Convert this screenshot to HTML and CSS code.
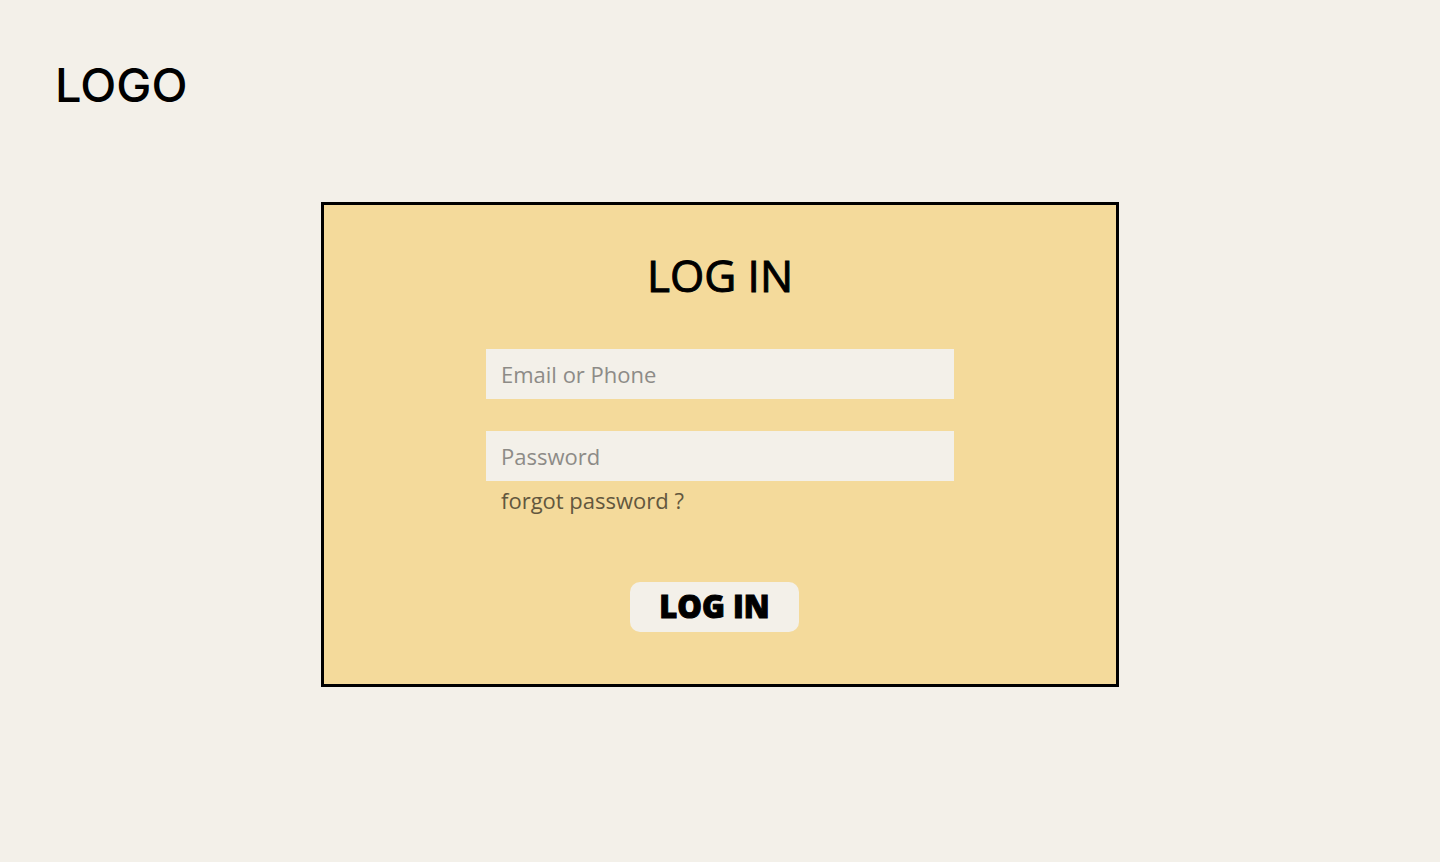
FILE: index.html
```html
<!DOCTYPE html>
<html lang="en">
<head>
<meta charset="utf-8">
<title>Log in</title>
<link rel="stylesheet" href="styles.css">
</head>
<body>
<header class="site-header"><span class="logo">LOGO</span></header>
<main class="page">
  <form class="card">
    <h1 class="title">LOG IN</h1>
    <div class="fields">
      <input class="field" type="text" placeholder="Email or Phone" aria-label="Email or Phone">
      <input class="field" type="password" placeholder="Password" aria-label="Password">
      <a class="forgot" href="#">forgot password ?</a>
    </div>
    <button class="submit" type="submit">LOG IN</button>
  </form>
</main>
</body>
</html>
```

FILE: styles.css
```css
* { box-sizing: border-box; }

body {
  margin: 0;
  background: #f3f0e9;
  color: #000;
  font-family: "Open Sans", sans-serif;
}

.site-header {
  padding: 56px 55px 0;
}

.logo {
  display: block;
  font: 500 47px/58px Inter, sans-serif;
}

.page {
  display: flex;
  justify-content: center;
  padding: 88px 24px 32px;
}

.card {
  display: flex;
  flex-direction: column;
  align-items: center;
  width: 100%;
  max-width: 798px;
  padding: 40px 24px 52px;
  border: 3px solid #000;
  background: #f4da9b;
}

.title {
  margin: 0 0 44px;
  font-size: 44px;
  font-weight: 400;
  line-height: 60px;
  -webkit-text-stroke: 1px #000;
}

.fields {
  display: flex;
  flex-direction: column;
  width: 100%;
  max-width: 468px;
}

.field {
  height: 50px;
  padding: 0 15px;
  border: 0;
  border-radius: 0;
  background: #f3f0e9;
  color: #000;
  font: 400 22px/30px "Open Sans", sans-serif;
}

.field + .field { margin-top: 32px; }

.field::placeholder {
  color: #8d8b87;
  opacity: 1;
}

.forgot {
  align-self: flex-start;
  margin: 4px 0 67px 15px;
  color: #62573e;
  font-size: 22px;
  line-height: 30px;
  text-decoration: none;
}

.submit {
  width: 169px;
  height: 50px;
  margin-right: 11px;
  padding: 0 0 2px;
  border: 0;
  border-radius: 10px;
  background: #f3f0e9;
  color: #000;
  font: 800 31px/40px "Open Sans", sans-serif;
  -webkit-text-stroke: 1px #000;
}
```
